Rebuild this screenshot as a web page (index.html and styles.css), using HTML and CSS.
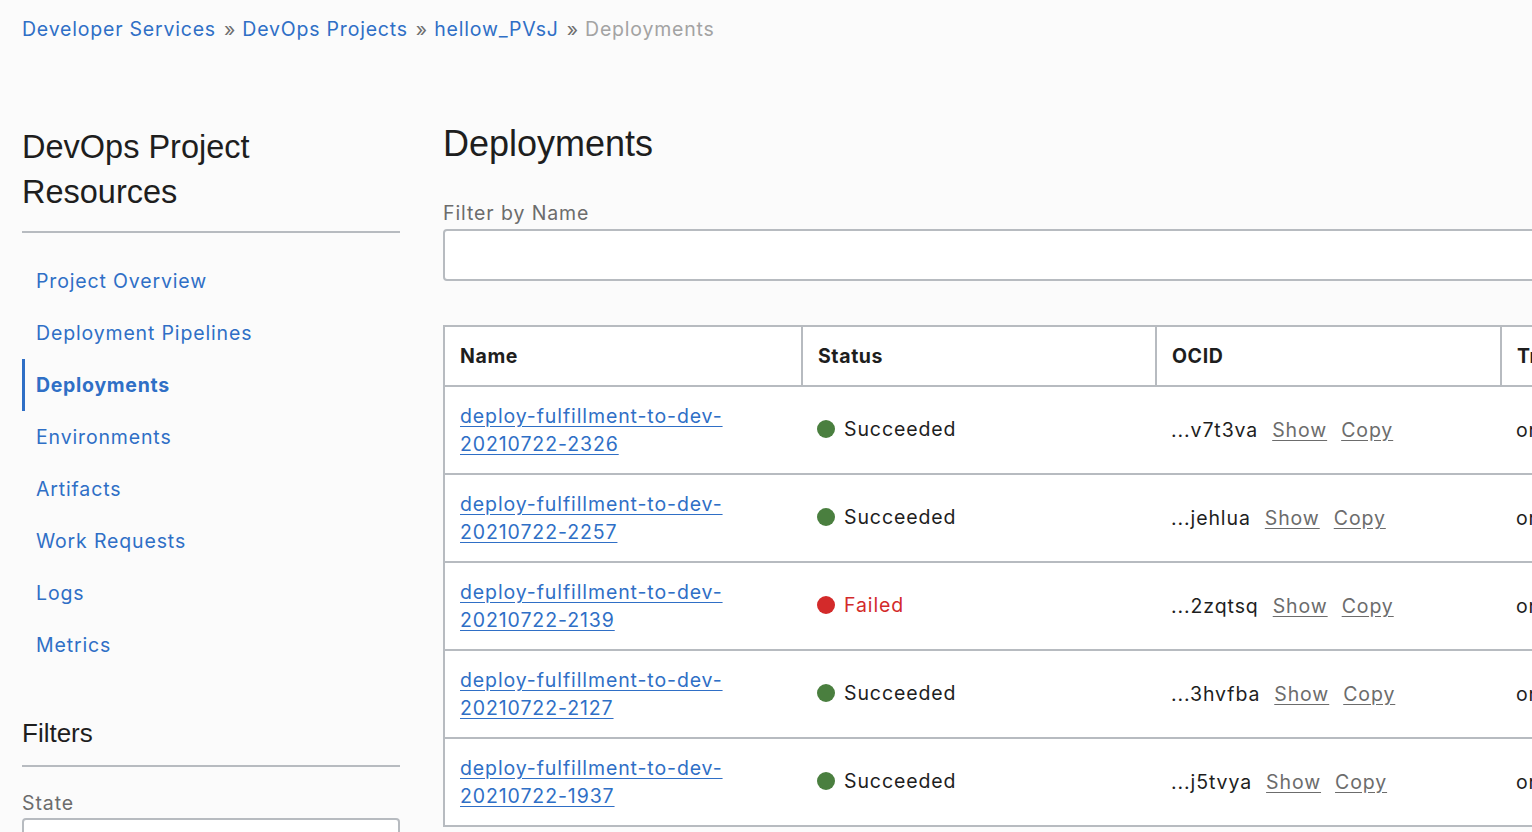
FILE: index.html
```html
<!DOCTYPE html>
<html lang="en">
<head>
<meta charset="utf-8">
<title>Deployments</title>
<link rel="stylesheet" href="styles.css">
</head>
<body>
<div class="page">
  <nav class="breadcrumb">
    <a href="#">Developer Services</a><span class="sep">»</span><a href="#">DevOps Projects</a><span class="sep">»</span><a href="#">hellow_PVsJ</a><span class="sep">»</span><span class="current">Deployments</span>
  </nav>
  <div class="layout">
    <aside class="sidebar">
      <h2 class="side-title">DevOps Project Resources</h2>
      <ul class="side-nav">
        <li><a href="#">Project Overview</a></li>
        <li><a href="#">Deployment Pipelines</a></li>
        <li class="active"><a href="#">Deployments</a></li>
        <li><a href="#">Environments</a></li>
        <li><a href="#">Artifacts</a></li>
        <li><a href="#">Work Requests</a></li>
        <li><a href="#">Logs</a></li>
        <li><a href="#">Metrics</a></li>
      </ul>
      <h2 class="filters-title">Filters</h2>
      <label class="field-label">State</label>
      <div class="select"></div>
    </aside>
    <main class="main">
      <h1 class="title">Deployments</h1>
      <label class="field-label">Filter by Name</label>
      <input class="text-input" type="text">
      <table class="grid">
        <thead>
          <tr><th class="c-name">Name</th><th class="c-status">Status</th><th class="c-ocid">OCID</th><th class="c-trig">Triggered By</th></tr>
        </thead>
        <tbody>
          <tr>
            <td><a href="#">deploy-fulfillment-to-dev-<br>20210722-2326</a></td>
            <td><span class="status ok"><span class="dot"></span>Succeeded</span></td>
            <td><span class="ocid">...v7t3va</span><a class="act" href="#">Show</a><a class="act" href="#">Copy</a></td>
            <td>oracleidentitycloudservice/user</td>
          </tr>
          <tr>
            <td><a href="#">deploy-fulfillment-to-dev-<br>20210722-2257</a></td>
            <td><span class="status ok"><span class="dot"></span>Succeeded</span></td>
            <td><span class="ocid">...jehlua</span><a class="act" href="#">Show</a><a class="act" href="#">Copy</a></td>
            <td>oracleidentitycloudservice/user</td>
          </tr>
          <tr>
            <td><a href="#">deploy-fulfillment-to-dev-<br>20210722-2139</a></td>
            <td><span class="status fail"><span class="dot"></span>Failed</span></td>
            <td><span class="ocid">...2zqtsq</span><a class="act" href="#">Show</a><a class="act" href="#">Copy</a></td>
            <td>oracleidentitycloudservice/user</td>
          </tr>
          <tr>
            <td><a href="#">deploy-fulfillment-to-dev-<br>20210722-2127</a></td>
            <td><span class="status ok"><span class="dot"></span>Succeeded</span></td>
            <td><span class="ocid">...3hvfba</span><a class="act" href="#">Show</a><a class="act" href="#">Copy</a></td>
            <td>oracleidentitycloudservice/user</td>
          </tr>
          <tr>
            <td><a href="#">deploy-fulfillment-to-dev-<br>20210722-1937</a></td>
            <td><span class="status ok"><span class="dot"></span>Succeeded</span></td>
            <td><span class="ocid">...j5tvya</span><a class="act" href="#">Show</a><a class="act" href="#">Copy</a></td>
            <td>oracleidentitycloudservice/user</td>
          </tr>
        </tbody>
      </table>
    </main>
  </div>
</div>
</body>
</html>
```

FILE: styles.css
```css
html, body {
  margin: 0;
  padding: 0;
  background: #fbfbfb;
  overflow: hidden;
}
body {
  font-family: Inter, "Noto Sans", sans-serif;
  color: #1e1e1e;
}
a { color: #2f6fc6; text-decoration: none; }

.page {
  padding: 0 0 0 22px;
  width: 1800px;
}

.breadcrumb {
  height: 58px;
  display: flex;
  align-items: center;
  font-size: 19.5px;
  letter-spacing: 0.8px;
}
.breadcrumb .sep {
  color: #6e6e6e;
  margin: 0 7px 0 8px;
  letter-spacing: 0;
}
.breadcrumb .current { color: #a3a3a3; }

.layout {
  display: flex;
  gap: 43px;
  padding-top: 64px;
}

.sidebar {
  width: 378px;
  flex: none;
}
.side-title {
  font-family: "Liberation Sans", Arial, sans-serif;
  font-weight: normal;
  font-size: 32.5px;
  line-height: 45px;
  margin: 3px 0 0;
  padding-bottom: 16px;
  border-bottom: 2px solid #b7bbc0;
  color: #1e1e1e;
}
.side-nav {
  list-style: none;
  margin: 22px 0 0;
  padding: 0;
}
.side-nav li {
  height: 52px;
  display: flex;
  align-items: center;
  padding-left: 11px;
  border-left: 3px solid transparent;
}
.side-nav li a {
  font-size: 19.5px;
  letter-spacing: 0.85px;
}
.side-nav li.active {
  border-left-color: #2f6fc6;
}
.side-nav li.active a { font-weight: 700; letter-spacing: 0.7px; }

.filters-title {
  font-family: "Liberation Sans", Arial, sans-serif;
  font-weight: normal;
  font-size: 26px;
  line-height: 34px;
  margin: 45px 0 0;
  padding-bottom: 15px;
  border-bottom: 2px solid #b7bbc0;
}
.field-label {
  display: block;
  font-size: 19.5px;
  line-height: 24px;
  color: #6c6c6c;
  letter-spacing: 0.9px;
}
.sidebar .field-label { margin-top: 24px; }
.select {
  margin-top: 3px;
  height: 48px;
  border: 2px solid #b7bbc0;
  border-radius: 4px;
  background: #fff;
}

.main {
  flex: none;
  width: 1300px;
}
.title {
  font-family: "Liberation Sans", Arial, sans-serif;
  font-weight: normal;
  font-size: 36px;
  line-height: 44px;
  margin: 0;
  color: #1e1e1e;
}
.main .field-label { margin-top: 35px; }
.text-input {
  display: block;
  box-sizing: border-box;
  width: 100%;
  height: 52px;
  margin: 4px 0 0;
  border: 2px solid #b7bbc0;
  border-radius: 4px;
  background: #fff;
}

.grid {
  margin-top: 44px;
  border-collapse: collapse;
  background: #fff;
  width: 1300px;
  table-layout: fixed;
  font-size: 19.5px;
  letter-spacing: 0.9px;
}
.grid th, .grid td {
  box-sizing: border-box;
  border-top: 2px solid #b7bbc0;
  border-bottom: 2px solid #b7bbc0;
  text-align: left;
  padding: 0 15px;
}
.grid th {
  height: 60px;
  font-weight: 700;
  letter-spacing: 0.6px;
  border-left: 2px solid #b7bbc0;
  border-right: 2px solid #b7bbc0;
  color: #1e1e1e;
}
.grid td {
  height: 88px;
  line-height: 28px;
  color: #1e1e1e;
  white-space: nowrap;
}
.grid td:first-child { border-left: 2px solid #b7bbc0; }
.c-name { width: 358px; }
.c-status { width: 354px; }
.c-ocid { width: 345px; }
.grid td a { text-decoration: underline; text-underline-offset: 3px; }

.status {
  display: inline-flex;
  align-items: center;
}
.status .dot {
  width: 18px;
  height: 18px;
  border-radius: 50%;
  margin-right: 9px;
}
.status.ok .dot { background: #4a7f3f; }
.status.fail { color: #d32a2a; }
.status.fail .dot { background: #d32a2a; }

.ocid { margin-right: 14px; }
.grid td a.act {
  color: #6c6c6c;
  margin-right: 14px;
}
```
